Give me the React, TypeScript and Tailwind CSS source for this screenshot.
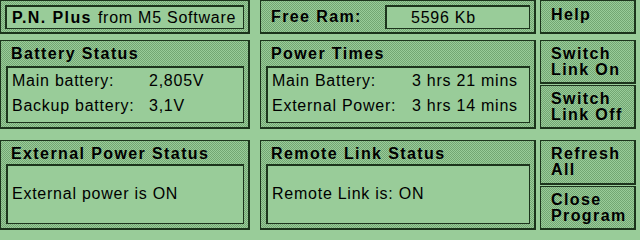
const dither =
  "bg-[image:repeating-conic-gradient(#99cc99_0_25%,#73a673_0_50%)] bg-[length:2px_2px]";

const regular = "font-['Liberation_Sans',Arial,sans-serif] text-[16px] tracking-[0.75px] text-black";
const bold = "font-['Liberation_Sans',Arial,sans-serif] font-bold text-[16px] tracking-[1.4px] text-black";

function Panel({ className = "", children }: { className?: string; children: React.ReactNode }) {
  return (
    <div className={`border border-r-2 border-b-2 border-[#1c341c] ${dither} ${className}`}>{children}</div>
  );
}

function Inset({ className = "", children }: { className?: string; children: React.ReactNode }) {
  return (
    <div className={`bg-[#99cc99] border border-t-2 border-l-2 border-[#1c341c] ${className}`}>{children}</div>
  );
}

function Button({ lines, className = "" }: { lines: string[]; className?: string }) {
  return (
    <Panel className={`flex flex-col justify-center pl-[10px] ${className}`}>
      {lines.map((l) => (
        <span key={l} className={`${bold} tracking-[1.1px] leading-[16px]`}>
          {l}
        </span>
      ))}
    </Panel>
  );
}

function StatusPanel({ title, text }: { title: string; text: string }) {
  return (
    <Panel className="h-full flex flex-col pl-[5px] pr-[4px] pt-[3px] pb-[4px]">
      <div className={`${bold} leading-[20px] pl-[5px]`}>{title}</div>
      <Inset className="flex-1 flex items-center pl-[4px] pb-[2px]">
        <span className={regular}>{text}</span>
      </Inset>
    </Panel>
  );
}

function ValuesPanel({ title, rows, col }: { title: string; rows: [string, string][]; col: string }) {
  return (
    <Panel className="h-full flex flex-col pl-[5px] pr-[4px] pt-[3px] pb-[4px]">
      <div className={`${bold} leading-[20px] pl-[5px] mb-[2px]`}>{title}</div>
      <Inset className={`flex-1 grid ${col} content-start pl-[4px]`}>
        {rows.map(([k, v]) => (
          <div key={k} className="contents">
            <span className={`${regular} leading-[25px]`}>{k}</span>
            <span className={`${regular} leading-[25px]`}>{v}</span>
          </div>
        ))}
      </Inset>
    </Panel>
  );
}

export default function App() {
  return (
    <div className="w-[640px] h-[240px] bg-[#99cc99] overflow-hidden">
      <div className="flex h-[34px]">
        <Panel className="w-[250px] pl-[4px] pr-[4px] pt-[4px] pb-[3px]">
          <Inset className="h-full flex items-center pl-[5px]">
            <span className={bold}>P.N. Plus</span>
            <span className={`${regular} ml-[6px]`}>from M5 Software</span>
          </Inset>
        </Panel>
        <Panel className="w-[276px] ml-[10px] flex items-center pl-[10px] pr-[4px] pt-[4px] pb-[3px]">
          <span className={`${bold} w-[114px]`}>Free Ram:</span>
          <Inset className="h-full flex-1 flex items-center pl-[24px]">
            <span className={regular}>5596 Kb</span>
          </Inset>
        </Panel>
        <Button lines={["Help"]} className="w-[96px] ml-[4px] justify-start! pt-[6px]" />
      </div>

      <div className="flex h-[89px] mt-[6px]">
        <div className="w-[250px]">
          <ValuesPanel
            title="Battery Status"
            col="grid-cols-[137px_1fr]"
            rows={[
              ["Main battery:", "2,805V"],
              ["Backup battery:", "3,1V"],
            ]}
          />
        </div>
        <div className="w-[276px] ml-[10px]">
          <ValuesPanel
            title="Power Times"
            col="grid-cols-[140px_1fr]"
            rows={[
              ["Main Battery:", "3 hrs 21 mins"],
              ["External Power:", "3 hrs 14 mins"],
            ]}
          />
        </div>
        <div className="w-[96px] ml-[4px] flex flex-col gap-[1px]">
          <Button lines={["Switch", "Link On"]} className="h-[44px]" />
          <Button lines={["Switch", "Link Off"]} className="h-[44px]" />
        </div>
      </div>

      <div className="flex h-[90px] mt-[11px]">
        <div className="w-[250px]">
          <StatusPanel title="External Power Status" text="External power is ON" />
        </div>
        <div className="w-[276px] ml-[10px]">
          <StatusPanel title="Remote Link Status" text="Remote Link is: ON" />
        </div>
        <div className="w-[96px] ml-[4px] flex flex-col gap-[1px]">
          <Button lines={["Refresh", "All"]} className="h-[45px]" />
          <Button lines={["Close", "Program"]} className="h-[44px]" />
        </div>
      </div>
    </div>
  );
}
